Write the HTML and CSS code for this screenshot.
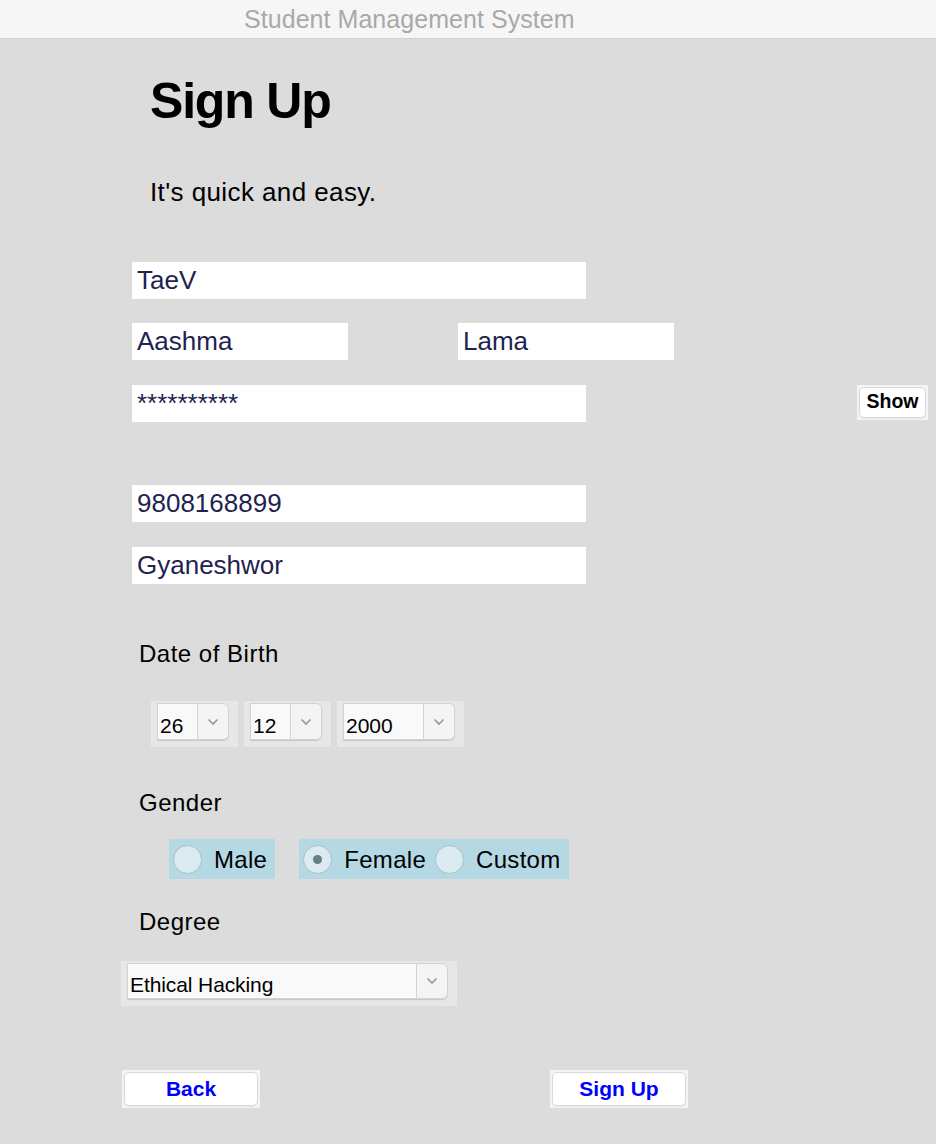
FILE: index.html
```html
<!DOCTYPE html>
<html lang="en">
<head>
<meta charset="utf-8">
<title>Student Management System</title>
<link rel="stylesheet" href="styles.css">
</head>
<body>
<header class="titlebar">Student Management System</header>
<main class="form">
  <h1 class="heading">Sign Up</h1>
  <p class="subtitle">It's quick and easy.</p>

  <div class="row first-row"><div class="field wide">TaeV</div></div>
  <div class="row name-row">
    <div class="field half">Aashma</div>
    <div class="field half">Lama</div>
  </div>
  <div class="row pass-row">
    <div class="field wide">**********</div>
    <div class="btn-panel show-panel"><button class="btn show-btn">Show</button></div>
  </div>
  <div class="row phone-row"><div class="field wide">9808168899</div></div>
  <div class="row addr-row"><div class="field wide">Gyaneshwor</div></div>

  <div class="label dob-label">Date of Birth</div>
  <div class="dob-row">
    <div class="combo-panel">
      <div class="combo"><span class="combo-text w-small">26</span><span class="combo-arrow"><svg width="12" height="8" viewBox="0 0 12 8"><polyline points="1.5,1.5 6,6 10.5,1.5" fill="none" stroke="#9a9a9a" stroke-width="1.7"/></svg></span></div>
    </div>
    <div class="combo-panel">
      <div class="combo"><span class="combo-text w-small">12</span><span class="combo-arrow"><svg width="12" height="8" viewBox="0 0 12 8"><polyline points="1.5,1.5 6,6 10.5,1.5" fill="none" stroke="#9a9a9a" stroke-width="1.7"/></svg></span></div>
    </div>
    <div class="combo-panel">
      <div class="combo"><span class="combo-text w-year">2000</span><span class="combo-arrow"><svg width="12" height="8" viewBox="0 0 12 8"><polyline points="1.5,1.5 6,6 10.5,1.5" fill="none" stroke="#9a9a9a" stroke-width="1.7"/></svg></span></div>
    </div>
  </div>

  <div class="label gender-label">Gender</div>
  <div class="gender-row">
    <div class="radio-panel">
      <span class="radio-item"><span class="radio"></span><span class="radio-text">Male</span></span>
    </div>
    <div class="radio-panel">
      <span class="radio-item"><span class="radio checked"></span><span class="radio-text">Female</span></span>
      <span class="radio-item"><span class="radio"></span><span class="radio-text">Custom</span></span>
    </div>
  </div>

  <div class="label degree-label">Degree</div>
  <div class="degree-row">
    <div class="combo-panel degree-panel">
      <div class="combo degree-combo"><span class="combo-text w-degree">Ethical Hacking</span><span class="combo-arrow"><svg width="12" height="8" viewBox="0 0 12 8"><polyline points="1.5,1.5 6,6 10.5,1.5" fill="none" stroke="#9a9a9a" stroke-width="1.7"/></svg></span></div>
    </div>
  </div>

  <div class="button-row">
    <div class="btn-panel action-panel"><button class="btn action-btn">Back</button></div>
    <div class="btn-panel action-panel"><button class="btn action-btn">Sign Up</button></div>
  </div>
</main>
</body>
</html>
```

FILE: styles.css
```css
* { box-sizing: border-box; }

html, body {
  margin: 0;
  padding: 0;
}

body {
  width: 936px;
  height: 1144px;
  background: #dcdcdc;
  font-family: "Liberation Sans", Arial, sans-serif;
  color: #000;
  overflow: hidden;
}

.titlebar {
  height: 39px;
  line-height: 38px;
  background: #f6f6f6;
  border-bottom: 1px solid #d1d1d1;
  padding-left: 244px;
  font-size: 25px;
  color: #a9a9a9;
  letter-spacing: 0.05px;
}

.form {
  display: block;
}

.heading {
  margin: 34px 0 0 150px;
  font-size: 50px;
  line-height: 56px;
  height: 56px;
  font-weight: bold;
  letter-spacing: -1.2px;
}

.subtitle {
  margin: 48px 0 0 150px;
  font-size: 26px;
  line-height: 30px;
  height: 30px;
  letter-spacing: 0.4px;
}

.row {
  display: flex;
  padding-left: 132px;
}

.first-row { margin-top: 55px; }
.name-row { margin-top: 24px; gap: 110px; }
.pass-row {
  margin-top: 25px;
  justify-content: space-between;
  align-items: flex-start;
  padding-right: 8px;
}
.phone-row { margin-top: 63px; }
.addr-row { margin-top: 25px; }

.field {
  height: 37px;
  background: #fff;
  color: #1f2350;
  font-size: 26px;
  line-height: 37px;
  padding-left: 5px;
}

.field.wide { width: 454px; }
.field.half { width: 216px; }

.btn-panel {
  background: #f4f4f4;
  padding: 2px;
  display: flex;
}

.btn {
  flex: 1;
  margin: 0;
  background: #fff;
  border: 1px solid #dadada;
  border-radius: 5px;
  font-family: "Liberation Sans", Arial, sans-serif;
  font-weight: bold;
  padding: 0;
  box-shadow: 0 1px 1px rgba(0,0,0,0.06);
}

.show-panel {
  width: 71px;
  height: 35px;
}

.show-btn {
  font-size: 19.5px;
  color: #000;
  padding-bottom: 3px;
}

.label {
  margin-left: 139px;
  font-size: 24px;
  line-height: 28px;
  height: 28px;
  letter-spacing: 0.5px;
}

.dob-label { margin-top: 56px; }
.gender-label { margin-top: 42px; }
.degree-label { margin-top: 29px; }

.dob-row {
  display: flex;
  gap: 6px;
  margin: 33px 0 0 151px;
}

.combo-panel {
  background: #e7e7e7;
  padding: 2px 9px 7px 6px;
}

.combo {
  display: flex;
  height: 37px;
  border-radius: 0 6px 6px 0;
  box-shadow: 0 1px 1px rgba(0,0,0,0.15);
}

.combo-text {
  display: block;
  height: 100%;
  background: #f9f9f9;
  border: 1px solid #d3d3d3;
  border-right: none;
  font-size: 21px;
  line-height: 24px;
  padding: 10px 0 0 2px;
  color: #000;
}

.w-small { width: 40px; }
.w-year { width: 80px; }
.w-degree { width: 289px; letter-spacing: -0.1px; }

.combo-arrow {
  width: 32px;
  height: 100%;
  display: flex;
  align-items: center;
  justify-content: center;
  background: #f4f4f4;
  border: 1px solid #d3d3d3;
  border-radius: 0 6px 6px 0;
}

.gender-row {
  display: flex;
  gap: 24px;
  margin: 22px 0 0 169px;
}

.radio-panel {
  display: flex;
  align-items: center;
  gap: 9px;
  background: #b4d8e4;
  padding: 6px 8px 5px 4px;
}

.radio-item {
  display: flex;
  align-items: center;
  gap: 12px;
}

.radio {
  width: 29px;
  height: 29px;
  border-radius: 50%;
  background: #dcebf1;
  border: 1px solid #a6c0c9;
  display: flex;
  align-items: center;
  justify-content: center;
}

.radio.checked::after {
  content: "";
  width: 9px;
  height: 9px;
  border-radius: 50%;
  background: #6c7c83;
}

.radio-text {
  font-size: 24px;
  line-height: 29px;
  color: #000;
  letter-spacing: 0.3px;
}

.degree-row {
  display: flex;
  margin: 25px 0 0 121px;
}

.degree-panel {
  padding: 2px 9px 7px 6px;
}

.degree-combo {
  height: 36px;
}

.degree-combo .combo-text {
  padding-top: 9px;
}

.button-row {
  display: flex;
  gap: 290px;
  margin: 64px 0 0 122px;
}

.action-panel {
  width: 138px;
  height: 38px;
}

.action-btn {
  font-size: 21px;
  color: #0000ff;
}
```
